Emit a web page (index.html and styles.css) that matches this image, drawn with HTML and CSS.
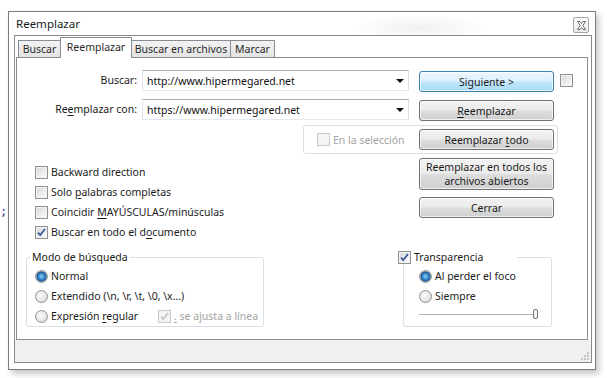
FILE: index.html
```html
<!DOCTYPE html>
<html lang="es">
<head>
  <meta charset="UTF-8">
  <meta name="viewport" content="width=device-width, initial-scale=1.0">
  <title>Reemplazar</title>

  <link rel="stylesheet" href="styles.css">
</head>
<body>

  <div class="editor-peek">;</div>

  <div class="window">
    <div class="titlebar">
      <span class="title">Reemplazar</span>
      <span class="close-btn">
        <svg width="9" height="9" viewBox="0 0 9 9">
          <path d="M0.5 0.5h2.5l1.5 2 1.5-2h2.5l-2.6 4 2.6 4h-2.5l-1.5-2-1.5 2h-2.5l2.6-4z" fill="#fff" stroke="#6a6a6a" stroke-width="1"/>
        </svg>
      </span>
    </div>

    <div class="frame">
      <div class="tabctl">
        <div class="tabs">
          <div class="tab tab-buscar">Buscar</div>
          <div class="tab tab-reemplazar active">Reemplazar</div>
          <div class="tab tab-archivos">Buscar en archivos</div>
          <div class="tab tab-marcar">Marcar</div>
        </div>

        <div class="panel">
          <div class="field-row first">
            <span class="field-label">Buscar:</span>
            <div class="combo">
              <span class="combo-text">http://www.hipermegared.net</span>
              <span class="combo-arrow"></span>
            </div>
            <button class="btn primary">Siguiente &gt;</button>
            <span class="check side-check"></span>
          </div>

          <div class="field-row">
            <span class="field-label">Re<u>e</u>mplazar con:</span>
            <div class="combo">
              <span class="combo-text">https://www.hipermegared.net</span>
              <span class="combo-arrow"></span>
            </div>
            <button class="btn"><u>R</u>eemplazar</button>
          </div>

          <div class="sel-box">
            <span class="option disabled"><span class="check"></span><span>En la selección</span></span>
            <button class="btn">Reemplazar <u>t</u>odo</button>
          </div>

          <div class="middle">
            <div class="options">
              <div class="option"><span class="check"></span><span>Backward direction</span></div>
              <div class="option"><span class="check"></span><span>Solo <u>p</u>alabras completas</span></div>
              <div class="option"><span class="check"></span><span>Coincidir <u>M</u>AYÚSCULAS/minúsculas</span></div>
              <div class="option"><span class="check checked"><svg width="9" height="9" viewBox="0 0 9 9"><path d="M1 4.5l2.2 2.6L8 1" fill="none" stroke="#3b5a9a" stroke-width="1.8"/></svg></span><span>Buscar en todo el d<u>o</u>cumento</span></div>
            </div>
            <div class="side-buttons">
              <button class="btn tall">Reemplazar en todos los<br>archivos abiertos</button>
              <button class="btn close">Cerrar</button>
            </div>
          </div>

          <div class="groups">
            <fieldset class="group mode">
              <legend>Modo de búsqueda</legend>
              <div class="option mode-row"><span class="radio on"></span><span>Normal</span></div>
              <div class="option mode-row"><span class="radio"></span><span>Extendido (\n, \r, \t, \0, \x...)</span></div>
              <div class="option mode-row">
                <span class="radio"></span><span class="regex-label">Expresión <u>r</u>egular</span>
                <span class="option disabled"><span class="check checked"><svg width="9" height="9" viewBox="0 0 9 9"><path d="M1 4.5l2.2 2.6L8 1" fill="none" stroke="#c4c4c4" stroke-width="1.8"/></svg></span><span class="nowrap"><u>.</u> se ajusta a línea</span></span>
              </div>
            </fieldset>

            <fieldset class="group transp">
              <legend><span class="check checked"><svg width="9" height="9" viewBox="0 0 9 9"><path d="M1 4.5l2.2 2.6L8 1" fill="none" stroke="#3b5a9a" stroke-width="1.8"/></svg></span><span>Transparencia</span></legend>
              <div class="option"><span class="radio on"></span><span>Al perder el foco</span></div>
              <div class="option"><span class="radio"></span><span>Siempre</span></div>
              <div class="slider"><span class="thumb"></span></div>
            </fieldset>
          </div>
        </div>
      </div>

      <div class="statusbar">
        <svg class="grip" width="10" height="10" viewBox="0 0 10 10">
          <g fill="#c6c6c6">
            <rect x="7" y="1" width="2" height="2"/>
            <rect x="4" y="4" width="2" height="2"/>
            <rect x="7" y="4" width="2" height="2"/>
            <rect x="1" y="7" width="2" height="2"/>
            <rect x="4" y="7" width="2" height="2"/>
            <rect x="7" y="7" width="2" height="2"/>
          </g>
        </svg>
      </div>
    </div>
  </div>

</body>
</html>
```

FILE: styles.css
```css
* {
  box-sizing: border-box;
}

body {
  margin: 0;
  width: 607px;
  height: 378px;
  overflow: hidden;
  position: relative;
  background-color: #fff;
  font-family: "Noto Sans", "Open Sans", sans-serif;
  font-size: 10.5px;
  color: #1b1b1b;
}

u {
  text-decoration-thickness: 1px;
  text-underline-offset: 2px;
}

.nowrap {
  white-space: nowrap;
}

/* bit of the editor showing behind the dialog */
.editor-peek {
  position: absolute;
  left: 0;
  top: 204px;
  color: #34348c;
  font-family: "DejaVu Sans Mono", monospace;
  font-size: 12px;
}

.window {
  margin: 11px 0 0 8px;
  width: 588px;
  height: 359px;
  border: 1px solid #7b7b7b;
  background: radial-gradient(ellipse 70px 14px at 410px 16px, rgba(0, 0, 0, 0.06), rgba(0, 0, 0, 0) 100%), #fff;
  box-shadow: 3px 4px 6px rgba(0, 0, 0, 0.22);
  display: flex;
  flex-direction: column;
}

.titlebar {
  height: 23px;
  display: flex;
  justify-content: space-between;
  align-items: center;
  padding: 0 6px 0 7px;
  font-size: 11.5px;
}

.close-btn {
  width: 16px;
  height: 16px;
  margin-top: 3px;
  border: 1px solid #a3a3a3;
  border-radius: 2px;
  background: linear-gradient(#fdfdfd, #ececec);
  display: flex;
  justify-content: center;
  align-items: center;
}

.frame {
  flex: 1;
  margin: 0 3px 6px 5px;
  border: 1px solid #8a8a8a;
  background-color: #fff;
  display: flex;
  flex-direction: column;
}

.tabctl {
  flex: 1;
  margin: 1px 3px 0 1px;
  display: flex;
  flex-direction: column;
}

.tabs {
  height: 20px;
  display: flex;
  align-items: flex-end;
  padding-left: 2px;
  position: relative;
  z-index: 1;
}

.tab {
  height: 17px;
  border: 1px solid #898c95;
  border-bottom: none;
  background: linear-gradient(#f3f3f3, #e3e3e3);
  display: flex;
  justify-content: center;
  align-items: center;
  margin-left: -1px;
  white-space: nowrap;
  color: #2a2a2a;
}

.tab-buscar {
  width: 43px;
  margin-left: 0;
}

.tab-reemplazar {
  width: 72px;
}

.tab-archivos {
  width: 100px;
}

.tab-marcar {
  width: 45px;
}

.tab.active {
  height: 21px;
  margin-bottom: -1px;
  background: #fff;
  align-items: flex-start;
  padding-top: 2px;
  position: relative;
  z-index: 2;
}

.panel {
  flex: 1;
  border: 1px solid #898c95;
  background-color: #fff;
  padding-top: 12px;
}

.field-row {
  height: 21px;
  display: flex;
  align-items: flex-start;
  margin-top: 8px;
}

.field-row.first {
  margin-top: 0;
}

.field-label {
  width: 120px;
  margin-right: 5px;
  text-align: right;
  line-height: 21px;
}

.combo {
  width: 267px;
  height: 21px;
  border: 1px solid #abadb3;
  border-color: #abadb3 #dbdfe6 #e3e9ef #e2e3ea;
  padding-left: 4px;
  display: flex;
  align-items: center;
  color: #111;
}

.combo-arrow {
  margin-left: auto;
  margin-right: 4px;
  border-left: 4px solid transparent;
  border-right: 4px solid transparent;
  border-top: 4px solid #111;
}

.btn {
  width: 135px;
  height: 21px;
  padding: 0;
  border: 1px solid #707070;
  border-radius: 3px;
  background: linear-gradient(#f2f2f2 0%, #ebebeb 48%, #dddddd 52%, #cfcfcf 100%);
  box-shadow: inset 0 0 0 1px rgba(255, 255, 255, 0.7);
  font: inherit;
  color: #1b1b1b;
  white-space: nowrap;
}

.field-row .btn {
  margin: 1px 0 0 10px;
}

.btn.primary {
  border-color: #3c7fb1;
  background: linear-gradient(#ecf7fd 0%, #dcf1fc 48%, #c1e7fd 52%, #a9daf5 100%);
}

.check {
  width: 13px;
  height: 13px;
  flex: none;
  margin-right: 3px;
  border: 1px solid #8e8f8f;
  background: linear-gradient(135deg, #d6d6d6, #f6f6f6 80%);
  box-shadow: inset 0 0 0 1px #f4f4f4;
  display: flex;
  justify-content: center;
  align-items: center;
}

.side-check {
  margin: 4px 0 0 6px;
}

.option {
  height: 20px;
  display: flex;
  align-items: center;
}

.option.disabled {
  color: #a3a3a3;
}

.option.disabled .check {
  border-color: #c9c9c9;
  background: #f5f5f5;
}

.sel-box {
  width: 255px;
  height: 29px;
  margin: 5px 0 0 286px;
  padding: 0 3px 0 13px;
  border: 1px solid #d5dfe5;
  border-radius: 3px;
  display: flex;
  justify-content: space-between;
  align-items: center;
}

.middle {
  display: flex;
}

.options {
  width: 402px;
  padding: 8px 0 0 18px;
}

.side-buttons {
  padding-top: 4px;
  display: flex;
  flex-direction: column;
}

.btn.tall {
  height: 32px;
  line-height: 14px;
}

.btn.close {
  margin-top: 7px;
}

.groups {
  display: flex;
  margin-top: 7px;
  padding-left: 9px;
}

.group {
  margin: 0;
  padding: 1px 0 0 3px;
  min-width: 0;
  border: 1px solid #d5dfe5;
  border-radius: 3px;
}

.group legend {
  padding: 0 2px;
  height: 16px;
  line-height: 16px;
  display: flex;
  align-items: center;
}

.mode {
  width: 238px;
  height: 78px;
}

.mode-row {
  margin-left: 5px;
}

.regex-label {
  width: 107px;
}

.transp {
  width: 149px;
  height: 78px;
  margin-left: 139px;
  padding-left: 15px;
}

.transp legend {
  width: 119px;
  margin-left: -21px;
  padding: 0;
}

.radio {
  width: 13px;
  height: 13px;
  flex: none;
  margin-right: 3px;
  border: 1px solid #8e8f8f;
  border-radius: 50%;
  background: radial-gradient(circle at 40% 40%, #fbfbfb, #d4d4d4);
}

.radio.on {
  background: radial-gradient(circle, #8ccdf4 0%, #2a7cc4 45%, #1b4f85 62%, #e8e8e8 70%, #d4d4d4 100%);
}

.slider {
  width: 119px;
  height: 18px;
  margin-top: 1px;
  position: relative;
  background: linear-gradient(#b4b4b4, #b4b4b4) left 7px / 100% 1px no-repeat,
              linear-gradient(#fff, #fff) left 8px / 100% 1px no-repeat;
}

.thumb {
  position: absolute;
  right: 0;
  top: 2px;
  width: 5px;
  height: 10px;
  border: 1px solid #777;
  border-radius: 2px;
  background: #f4f4f4;
}

.statusbar {
  height: 22px;
  background-color: #f0f0f0;
  display: flex;
  justify-content: flex-end;
  align-items: flex-end;
  padding: 0 1px 1px 0;
}
```
